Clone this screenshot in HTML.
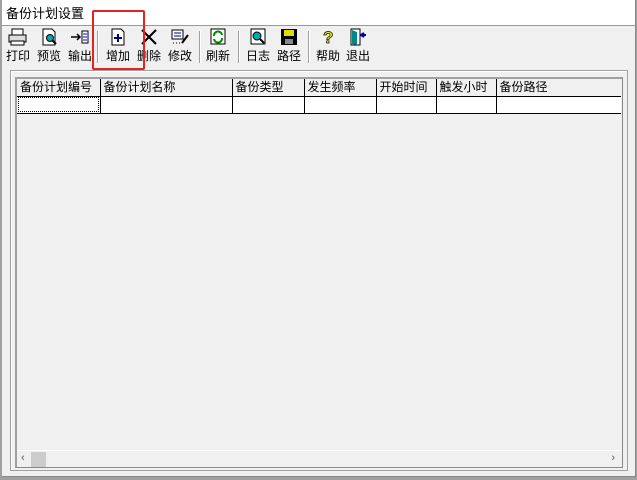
<!DOCTYPE html>
<html><head><meta charset="utf-8"><style>
*{margin:0;padding:0;box-sizing:border-box}
body{width:637px;height:480px;background:#a0a0a0;position:relative;overflow:hidden;font-family:"Liberation Sans","Noto Sans CJK SC",sans-serif;font-size:12px;color:#000}
.win{position:absolute;left:2px;top:0;width:634px;height:477px;background:#f0f0f0;border-right:1px solid #888;border-bottom:1px solid #888}
.title{position:absolute;left:0;top:0;width:633px;height:26px;background:#fff;border-bottom:1px solid #999}
.title span{position:absolute;left:4px;top:3px;font-size:13px}
.tb{position:absolute;top:28px;text-align:center;font-size:12px}
.tb svg{display:block;margin:0 auto}
.tb .l{display:block;margin-top:1px;white-space:nowrap}
.sep{position:absolute;top:31px;width:2px;height:32px;border-left:1px solid #a0a0a0;border-right:1px solid #fff}
.red{position:absolute;left:90px;top:10px;width:53px;height:60px;border:2px solid #e82020;border-radius:2px}
.panel{position:absolute;left:8px;top:70px;width:618px;height:401px;border:1px solid #a0a0a0;box-shadow:inset 1px 1px 0 #fff}
.grid{position:absolute;left:4px;top:6px;width:608px;height:391px;border:1px solid #888;border-top:2px solid #a0a0a0;border-left:2px solid #a0a0a0;background:#f0f0f0}
table{border-collapse:collapse;position:absolute;left:0;top:0}
td{height:17px;border-right:1px solid #000;border-bottom:1px solid #000;padding:0 3px;font-size:12px;white-space:nowrap;overflow:hidden;line-height:16px}
tr.r td{background:#fff;height:17px}
.sb{position:absolute;left:0;bottom:0;width:604px;height:17px;border-top:1px solid #fff;background:#f0f0f0}
</style></head><body>
<div class="win">
<div class="title"><span>备份计划设置</span></div>
<div class="tb" style="left:2px;width:28px"><svg width="20" height="18"><rect x="4" y="1" width="11" height="6" fill="#fff" stroke="#000"/><rect x="1" y="7" width="17" height="7" fill="#ddd" stroke="#000"/><rect x="3" y="13" width="13" height="4" fill="#fff" stroke="#000"/></svg><span class="l">打印</span></div>
<div class="tb" style="left:33px;width:28px"><svg width="20" height="18"><path d="M4 1h9l3 3v13H4z" fill="#fff" stroke="#000"/><circle cx="11" cy="10" r="3.5" fill="#0aa" stroke="#000"/><path d="M13 12l4 4" stroke="#000" stroke-width="2"/></svg><span class="l">预览</span></div>
<div class="tb" style="left:64px;width:28px"><svg width="20" height="18"><path d="M1 9h9M7 6l3 3-3 3" stroke="#000" fill="none" stroke-width="1.5"/><rect x="12" y="3" width="6" height="12" fill="#fff" stroke="#000"/><path d="M13 6h4M13 9h4M13 12h4" stroke="#00f"/></svg><span class="l">输出</span></div>
<div class="sep" style="left:95px"></div>
<div class="tb" style="left:101px;width:30px"><svg width="20" height="18"><path d="M4 1h9l3 3v13H4z" fill="#fff" stroke="#000"/><path d="M10 6v8M6 10h8" stroke="#000080" stroke-width="2"/></svg><span class="l">增加</span></div>
<div class="tb" style="left:132px;width:30px"><svg width="20" height="18"><path d="M3 2l14 14M17 2L3 16" stroke="#000" stroke-width="2"/></svg><span class="l">删除</span></div>
<div class="tb" style="left:163px;width:30px"><svg width="20" height="18"><rect x="2" y="2" width="11" height="9" fill="#fff" stroke="#000"/><path d="M4 5h7M4 8h7" stroke="#000080"/><path d="M12 15l6-8" stroke="#000" stroke-width="2"/><path d="M3 15h1M6 15h1M9 15h1" stroke="#000"/></svg><span class="l">修改</span></div>
<div class="sep" style="left:197px"></div>
<div class="tb" style="left:201px;width:30px"><svg width="20" height="18"><rect x="3" y="1" width="14" height="15" fill="#fff" stroke="#000"/><path d="M6 8a4 4 0 0 1 8-1M14 10a4 4 0 0 1-8 1" stroke="#080" stroke-width="2" fill="none"/></svg><span class="l">刷新</span></div>
<div class="sep" style="left:236px"></div>
<div class="tb" style="left:241px;width:30px"><svg width="20" height="18"><rect x="3" y="1" width="14" height="15" fill="#fff" stroke="#000"/><circle cx="9" cy="8" r="4" fill="#0aa" stroke="#000"/><path d="M12 11l4 4" stroke="#000" stroke-width="2"/></svg><span class="l">日志</span></div>
<div class="tb" style="left:272px;width:30px"><svg width="20" height="18"><rect x="2" y="1" width="16" height="16" fill="#000"/><rect x="5" y="2" width="10" height="6" fill="#dd0"/><rect x="6" y="11" width="8" height="5" fill="#888"/></svg><span class="l">路径</span></div>
<div class="sep" style="left:306px"></div>
<div class="tb" style="left:311px;width:30px"><svg width="20" height="18"><text x="5" y="15" font-size="17" font-weight="bold" fill="#ee0" stroke="#000" stroke-width="0.7" font-family="Liberation Sans">?</text></svg><span class="l">帮助</span></div>
<div class="tb" style="left:341px;width:30px"><svg width="20" height="18"><rect x="3" y="1" width="9" height="16" fill="#fff" stroke="#000"/><path d="M4 2l5 2v13l-5-1z" fill="#088"/><path d="M18 7h-4M16 5l-3 2 3 2" stroke="#00a" stroke-width="2" fill="none"/></svg><span class="l">退出</span></div>
<div class="red"></div>
<div class="panel"><div class="grid">
<table>
<tr><td style="width:83px">备份计划编号</td><td style="width:132px">备份计划名称</td><td style="width:72px">备份类型</td><td style="width:72px">发生频率</td><td style="width:60px">开始时间</td><td style="width:60px">触发小时</td><td style="width:125px;border-right:none">备份路径</td></tr>
<tr class="r"><td style="outline:1px dotted #000;outline-offset:-2px"></td><td></td><td></td><td></td><td></td><td></td><td style="border-right:none"></td></tr>
</table>
<div class="sb"><span style="position:absolute;left:4px;top:1px;color:#555;font-size:11px">&lsaquo;</span><div style="position:absolute;left:14px;top:1px;width:15px;height:15px;background:#ccc"></div><span style="position:absolute;right:6px;top:1px;color:#555;font-size:11px">&rsaquo;</span></div>
</div></div>
</div>
</body></html>
